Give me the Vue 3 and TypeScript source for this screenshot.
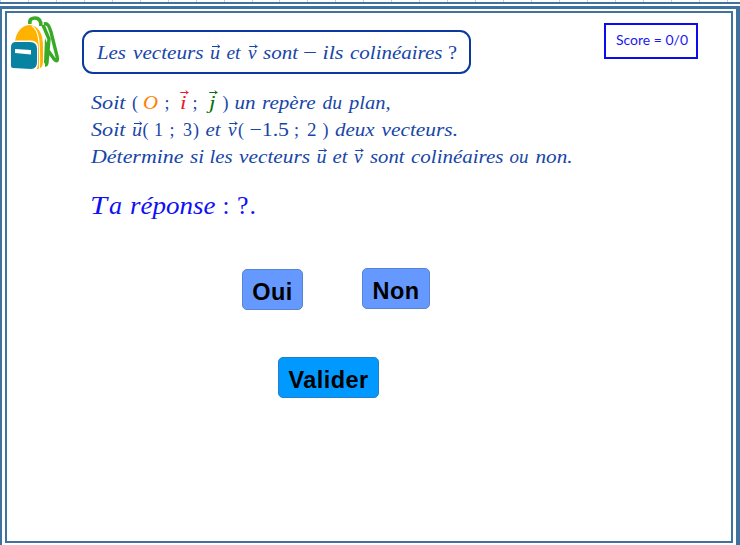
<script setup lang="ts">
interface Token {
  text: string
  x: number
  w: number
  kind?: 'vector' | 'roman'
  tone?: string
}

interface Line {
  id: string
  size: number
  tokens: Token[]
}

const t = (text: string, x: number, end: number, kind?: Token['kind'], tone?: string): Token => ({
  text,
  x,
  w: end - x,
  kind,
  tone,
})

const title: Token[] = [
  t('Les', 97, 126), t('vecteurs', 133, 203.5), t('u', 210, 220, 'vector'), t('et', 226.5, 240.5),
  t('v', 248, 256.5, 'vector'), t('sont', 263, 298), t('−', 303, 317, 'roman'), t('ils', 322.5, 343.5),
  t('colinéaires', 350, 442.5), t('?', 448, 457, 'roman'),
]

const lines: Line[] = [
  {
    id: 'frame',
    size: 19.5,
    tokens: [
      t('Soit', 91, 125.5), t('(', 132, 138, 'roman'), t('O', 143, 158, undefined, 'orange'),
      t(';', 164.5, 169.5, 'roman'), t('i', 180, 186.5, 'vector', 'red'), t(';', 192.5, 197.5, 'roman'),
      t('j', 209, 215.5, 'vector', 'green'), t(')', 222.5, 228.5, 'roman'), t('un', 234.5, 255.5),
      t('repère', 262, 315.5), t('du', 322.5, 342), t('plan,', 349, 390.5),
    ],
  },
  {
    id: 'vectors',
    size: 19.5,
    tokens: [
      t('Soit', 91, 125.5), t('u', 132, 142, 'vector'), t('(', 142.5, 148.5, 'roman'),
      t('1', 154, 163, 'roman'), t(';', 169.5, 174.5, 'roman'), t('3', 183, 192, 'roman'),
      t(')', 193, 199, 'roman'), t('et', 205.5, 220.5), t('v', 228, 236.5, 'vector'),
      t('(', 238, 244, 'roman'), t('−1.5', 249.5, 289, 'roman'), t(';', 294, 299, 'roman'),
      t('2', 307, 316.5, 'roman'), t(')', 322.5, 328.5, 'roman'), t('deux', 335, 374.5),
      t('vecteurs.', 381.5, 458),
    ],
  },
  {
    id: 'question',
    size: 19.5,
    tokens: [
      t('Détermine', 91, 183.5), t('si', 190, 204), t('les', 209.5, 232.5), t('vecteurs', 239, 310),
      t('u', 316.5, 326.5, 'vector'), t('et', 332.5, 347.5), t('v', 354, 362.5, 'vector'),
      t('sont', 370, 404.5), t('colinéaires', 411, 503.5), t('ou', 509.5, 528.5), t('non.', 535.5, 572.5),
    ],
  },
]

const answer: Token[] = [
  t('T', 90, 107), t('a', 109, 122), t('réponse', 130, 215.5), t(':', 222.5, 229.5, 'roman'),
  t('?', 237, 248.5, 'roman'), t('.', 249.5, 256, 'roman'),
]
</script>

<template>
  <main class="page">
    <div class="grid-strip"></div>
    <div class="window">
      <section class="sheet">
        <header class="header">
          <svg class="bag" viewBox="0 0 49 55" aria-hidden="true">
            <path d="M19 8C18 3 21 2 24 2s6 2 6 8" fill="none" stroke="#38aa25" stroke-width="3.6" />
            <path d="M33 8C37 7 38 10 40 16L46 40C47 45 46 46 43 43L36 33M32 9L38 23L36 46C36 48 35 49 34 49" fill="none" stroke="#38aa25" stroke-width="3.4" />
            <path d="M34 22L38 32L35 48L33 47Z" fill="#38aa25" />
            <path d="M17 9C29 8 32 17 33 28V46C33 51 31 54 27 54H3V27C5 16 10 9 17 9Z" fill="#fff" />
            <path d="M4 25C6 13 13 9 19 9C28 10 32 18 32 30V45C32 51 30 53 25 53H10V25Z" fill="#ffb300" />
            <path d="M21 10C28 14 29 25 28.5 53" fill="none" stroke="#fff" stroke-width="1.1" />
            <path d="M5 24.5H20Q27 25 27 31V48Q27 55 20 55H0V27Q2 24.5 5 24.5Z" fill="#fff" />
            <path d="M5 26H19Q26 26 26 33V46Q26 53 20 53L2 52Q0 52 0 50V31Q0 26 5 26Z" fill="#0782a1" />
            <path d="M4 33L20 34V38.5L4 37Z" fill="#fff" />
          </svg>
          <h1 class="title">
            <svg class="math" width="385" height="40" viewBox="84 32 385 40">
              <g v-for="(k, n) in title" :key="n">
                <text :x="k.x" y="59" font-size="19.5" :class="k.kind" :textLength="k.w" lengthAdjust="spacingAndGlyphs">{{ k.text }}</text>
                <path v-if="k.kind === 'vector'" class="arrow" :transform="`translate(${k.x + k.w / 2 - 3} 46.5)`" d="M0 0H8M5.7-2Q6.3-.3 8 0Q6.4.4 5.8 1.7" />
              </g>
            </svg>
          </h1>
          <div class="score">
            <svg class="score-text" width="74" height="20" viewBox="0 0 74 20">
              <text x="1" y="14" textLength="72" lengthAdjust="spacingAndGlyphs">Score = 0/0</text>
            </svg>
          </div>
        </header>

        <div class="statement">
          <svg v-for="line in lines" :key="line.id" class="math" width="500" height="27" viewBox="84 0 500 27">
            <g v-for="(k, n) in line.tokens" :key="n" :class="k.tone">
              <text :x="k.x" y="19.5" :font-size="line.size" :class="k.kind" :textLength="k.w" lengthAdjust="spacingAndGlyphs">{{ k.text }}</text>
              <path v-if="k.kind === 'vector'" class="arrow" :transform="`translate(${k.x + k.w / 2 - 3} ${k.tone ? 3.5 : 7.5})`" d="M0 0H8M5.7-2Q6.3-.3 8 0Q6.4.4 5.8 1.7" />
            </g>
          </svg>
        </div>

        <svg class="math answer" width="300" height="40" viewBox="84 185 300 40">
          <text v-for="(k, n) in answer" :key="n" :x="k.x" y="213.5" font-size="26" :class="k.kind" :textLength="k.w" lengthAdjust="spacingAndGlyphs">{{ k.text }}</text>
        </svg>

        <div class="choices">
          <button class="btn oui" type="button">Oui</button>
          <button class="btn non" type="button">Non</button>
        </div>
        <button class="btn submit" type="button">Valider</button>
      </section>
    </div>
  </main>
</template>

<style>
body {
  margin: 0;
  background: #fff;
  overflow: hidden;
}
</style>

<style scoped>
.page {
  display: flex;
  flex-direction: column;
  box-sizing: border-box;
  width: 740px;
  height: 545px;
  overflow: hidden;
}
.grid-strip {
  box-sizing: border-box;
  height: 4px;
  margin-bottom: 2px;
  border-bottom: 2px solid #4072a0;
  background: repeating-linear-gradient(90deg, #c6c6ff 0 1px, #fff 1px 27.95px);
}
.window {
  box-sizing: border-box;
  flex: 1;
  padding: 2px 3px 2px;
  border: solid #4072a0;
  border-width: 3px 4px 0 2px;
}
.sheet {
  box-sizing: border-box;
  height: 532px;
  border: 2px solid #4072a0;
}
.header {
  display: flex;
  align-items: flex-start;
  height: 76px;
}
.bag {
  width: 49px;
  height: 55px;
  margin: 3px 0 0 4px;
}
.title {
  box-sizing: border-box;
  width: 389px;
  height: 44px;
  margin: 17px 0 0 22px;
  border: 2px solid #0a3a9f;
  border-radius: 11px;
}
.math {
  display: block;
  overflow: visible;
  fill: #1746a8;
  stroke: none;
  color: #1746a8;
  font-family: "Liberation Serif", serif;
  font-style: italic;
  font-weight: 400;
}
.math .roman {
  font-style: normal;
}
.arrow {
  fill: none;
  stroke: currentColor;
  stroke-width: 1;
}
.orange { fill: #ff7f00; color: #ff7f00; }
.red { fill: #f01828; color: #f01828; }
.green { fill: #087008; color: #087008; }
.score {
  box-sizing: border-box;
  width: 94px;
  height: 36px;
  padding: 6px 0 0 9px;
  margin: 10px 0 0 133px;
  border: 2px solid #0b0bef;
}
.score-text {
  display: block;
  fill: #1818ee;
  font: 13.5px Lato, sans-serif;
}
.statement {
  margin-left: 77px;
}
.answer {
  margin: 15px 0 0 77px;
  fill: #1010f5;
}
.choices {
  display: flex;
  gap: 60px;
  align-items: flex-start;
  margin: 43px 0 0 235px;
}
.btn {
  box-sizing: border-box;
  display: block;
  height: 41px;
  padding: 5px 0 0;
  border: 1px solid #5685cf;
  border-radius: 5px;
  background: #6699ff;
  color: #000;
  font: bold 23.5px "Liberation Sans", sans-serif;
  letter-spacing: 0.4px;
}
.oui { width: 61px; margin-top: 1px; }
.non { width: 68px; margin-left: -1px; }
.submit {
  width: 101px;
  margin: 47px 0 0 271px;
  border-color: #247fc8;
  background: #0099ff;
}
</style>
